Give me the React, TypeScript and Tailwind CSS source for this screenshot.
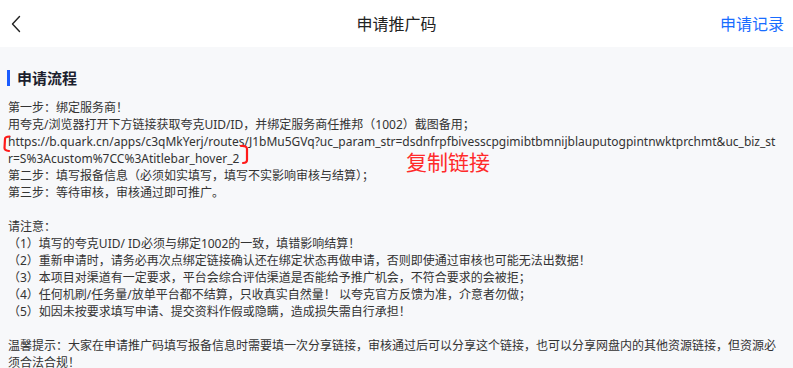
import React from "react";

const steps = [
  "第一步：绑定服务商！",
  "用夸克/浏览器打开下方链接获取夸克UID/ID，并绑定服务商任推邦（1002）截图备用；",
];

const link =
  "https://b.quark.cn/apps/c3qMkYerj/routes/J1bMu5GVq?uc_param_str=dsdnfrpfbivesscpgimibtbmnijblauputogpintnwktprchmt&uc_biz_str=S%3Acustom%7CC%3Atitlebar_hover_2";

const notes = [
  "（1）填写的夸克UID/ ID必须与绑定1002的一致，填错影响结算！",
  "（2）重新申请时，请务必再次点绑定链接确认还在绑定状态再做申请，否则即使通过审核也可能无法出数据！",
  "（3）本项目对渠道有一定要求，平台会综合评估渠道是否能给予推广机会，不符合要求的会被拒；",
  "（4）任何机刷/任务量/放单平台都不结算，只收真实自然量！ 以夸克官方反馈为准，介意者勿做；",
  "（5）如因未按要求填写申请、提交资料作假或隐瞒，造成损失需自行承担！",
];

const App = () => {
  return (
    <div
      className="w-[793px] h-[368px] overflow-hidden bg-[#f7f8fa] text-[#333]"
      style={{ fontFamily: '"Noto Sans", "Noto Sans CJK SC", sans-serif' }}
    >
      {/* header */}
      <div className="h-[47px] bg-white flex items-center justify-between px-2 relative">
        <svg width="14" height="20" viewBox="0 0 14 20" className="ml-[2px]">
          <path d="M9.5 2.5 L2.5 10 L9.5 17.5" fill="none" stroke="#222" strokeWidth="1.4" strokeLinecap="round" strokeLinejoin="round" />
        </svg>
        <h1 className="absolute left-1/2 -translate-x-1/2 text-[16px] text-[#222]">申请推广码</h1>
        <span className="text-[16px] text-[#1a6dff] mr-[1px]">申请记录</span>
      </div>

      {/* body */}
      <div className="relative pl-2 pr-[14px] pt-[21px]">
        <div className="flex items-center gap-[7px] h-[20px]">
          <span className="w-[3px] h-[16px] bg-[#1a5cff] ml-[-1px]" />
          <h2 className="text-[15px] font-bold text-[#1c1f2e]">申请流程</h2>
        </div>

        <div className="mt-[11px] text-[12px] leading-[17px]">
          {steps.map((s) => (
            <p key={s}>{s}</p>
          ))}
          <p className="break-all">{link}</p>
          <p>第二步：填写报备信息（必须如实填写，填写不实影响审核与结算）；</p>
          <p>第三步：等待审核，审核通过即可推广。</p>
          <p className="h-[17px]" />
          <p>请注意：</p>
          {notes.map((n) => (
            <p key={n}>{n}</p>
          ))}
          <p className="h-[17px]" />
          <p>
            温馨提示：大家在申请推广码填写报备信息时需要填一次分享链接，审核通过后可以分享这个链接，也可以分享网盘内的其他资源链接，但资源必须合法合规！
          </p>
        </div>

        {/* red annotations */}
        <svg width="10" height="18" viewBox="0 0 10 18" className="absolute left-[1px] top-[88px]">
          <path d="M8.5 1.5 Q4 1.5 4 4 L3.5 13 Q3.5 15.5 8 16" fill="none" stroke="#ff1a1a" strokeWidth="2.2" strokeLinecap="round" />
        </svg>
        <svg width="12" height="22" viewBox="0 0 12 22" className="absolute left-[239px] top-[97px]">
          <path d="M2 2 Q8 1.5 8 5 L8 16 Q8 19 4 19" fill="none" stroke="#ff1a1a" strokeWidth="2.2" strokeLinecap="round" />
        </svg>
        <span className="absolute left-[406px] top-[101px] text-[21px] leading-[28px] text-[#ff2a2a]">复制链接</span>
      </div>
    </div>
  );
};

export default App;
